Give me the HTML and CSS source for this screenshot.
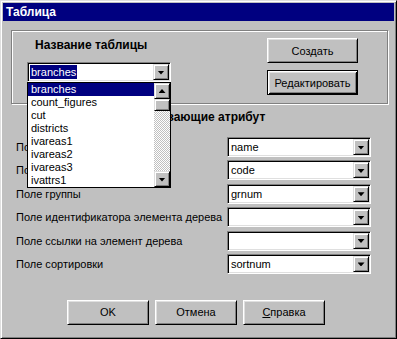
FILE: index.html
```html
<!DOCTYPE html>
<html lang="ru">
<head>
  <meta charset="UTF-8" />
  <title>Таблица</title>
  <link rel="stylesheet" href="styles.css">
</head>
<body>

  <div class="window">
    <div class="titlebar">Таблица</div>

    <div class="dialog">

      <div class="groupbox">
        <div class="table-pick">
          <h2 class="caption">Название таблицы</h2>
          <div class="combo">
            <span class="combo-text"><span class="selected">branches</span></span>
            <span class="combo-btn"><span class="arrow"></span></span>

            <div class="droplist">
              <ul class="items">
                <li class="active">branches</li>
                <li>count_figures</li>
                <li>cut</li>
                <li>districts</li>
                <li>ivareas1</li>
                <li>ivareas2</li>
                <li>ivareas3</li>
                <li>ivattrs1</li>
              </ul>
              <div class="scrollbar">
                <span class="sb-btn"><span class="arrow arrow-up"></span></span>
                <span class="sb-thumb"></span>
                <span class="sb-track"></span>
                <span class="sb-btn"><span class="arrow"></span></span>
              </div>
            </div>
          </div>
        </div>

        <div class="group-buttons">
          <button class="btn">Создать</button>
          <button class="btn btn-default">Редактировать</button>
        </div>
      </div>

      <h2 class="caption caption-attrs">Поля таблицы, описывающие атрибут</h2>

      <div class="fields">
        <label>Поле наименования</label>
        <div class="combo"><span class="combo-text">name</span><span class="combo-btn"><span class="arrow"></span></span></div>

        <label>Поле кода</label>
        <div class="combo"><span class="combo-text">code</span><span class="combo-btn"><span class="arrow"></span></span></div>

        <label>Поле группы</label>
        <div class="combo"><span class="combo-text">grnum</span><span class="combo-btn"><span class="arrow"></span></span></div>

        <label>Поле идентификатора элемента дерева</label>
        <div class="combo"><span class="combo-text"></span><span class="combo-btn"><span class="arrow"></span></span></div>

        <label>Поле ссылки на элемент дерева</label>
        <div class="combo"><span class="combo-text"></span><span class="combo-btn"><span class="arrow"></span></span></div>

        <label>Поле сортировки</label>
        <div class="combo"><span class="combo-text">sortnum</span><span class="combo-btn"><span class="arrow"></span></span></div>
      </div>

      <div class="footer">
        <button class="btn btn-small">OK</button>
        <button class="btn btn-small">Отмена</button>
        <button class="btn btn-small"><u>С</u>правка</button>
      </div>

    </div>
  </div>

</body>
</html>
```

FILE: styles.css
```css
body {
  margin: 0;
  font-family: 'Liberation Sans', Arial, sans-serif;
  font-size: 11px;
  color: #000;
  background-color: #c0c0c0;
}

.window {
  width: 397px;
  height: 339px;
  box-sizing: border-box;
  background-color: #c0c0c0;
  border: 1px solid;
  border-color: #dfdfdf #000 #000 #dfdfdf;
  box-shadow: inset 1px 1px #fff, inset -1px -1px #808080;
  padding: 2px;
}

.titlebar {
  height: 18px;
  background-color: #000080;
  color: #fff;
  font-weight: bold;
  font-size: 12px;
  line-height: 18px;
  padding-left: 3px;
}

.dialog {
  padding: 9px 6px 0 8px;
}

/* group box with etched frame */
.groupbox {
  height: 74px;
  box-sizing: border-box;
  border: 1px solid #808080;
  box-shadow: inset 1px 1px #fff, 1px 1px #fff;
  padding: 7px 29px 0 15px;
  display: flex;
}

.caption {
  margin: 0;
  font-size: 12px;
  font-weight: bold;
  line-height: 15px;
  padding-left: 8px;
}

.table-pick .combo {
  margin-top: 9px;
}

.group-buttons {
  margin-left: auto;
  display: flex;
  flex-direction: column;
  gap: 7px;
}

.btn {
  width: 91px;
  height: 25px;
  box-sizing: border-box;
  background-color: #c0c0c0;
  border: 1px solid;
  border-color: #fff #000 #000 #fff;
  box-shadow: inset 1px 1px #dfdfdf, inset -1px -1px #808080;
  font-family: 'Liberation Sans', Arial, sans-serif;
  font-size: 11px;
  color: #000;
  padding: 0;
}

.btn-default {
  border-color: #000;
  box-shadow: inset 1px 1px #fff, inset -1px -1px #000, inset 2px 2px #dfdfdf, inset -2px -2px #808080;
}

.btn-small {
  width: 82px;
}

/* combo box */
.combo {
  position: relative;
  width: 144px;
  height: 20px;
  box-sizing: border-box;
  background-color: #fff;
  border: 1px solid;
  border-color: #808080 #fff #fff #808080;
  box-shadow: inset 1px 1px #000, inset -1px -1px #dfdfdf;
  padding: 1px;
  display: flex;
}

.combo-text {
  flex: 1;
  line-height: 16px;
  padding-left: 2px;
  white-space: nowrap;
}

.selected {
  background-color: #000080;
  color: #fff;
  padding: 1px 1px;
  margin-left: -1px;
}

.combo-btn,
.sb-btn {
  width: 16px;
  height: 16px;
  box-sizing: border-box;
  background-color: #c0c0c0;
  border: 1px solid;
  border-color: #dfdfdf #000 #000 #dfdfdf;
  box-shadow: inset 1px 1px #fff, inset -1px -1px #808080;
  display: flex;
  align-items: center;
  justify-content: center;
  flex-shrink: 0;
}

.arrow {
  width: 7px;
  height: 4px;
  background-color: #000;
  clip-path: polygon(0 0, 100% 0, 50% 100%);
  margin-top: 1px;
}

.arrow-up {
  clip-path: polygon(50% 0, 100% 100%, 0 100%);
  margin-top: 0;
}

/* open drop-down list */
.droplist {
  position: absolute;
  top: calc(100% + 1px);
  left: -1px;
  width: 144px;
  height: 106px;
  box-sizing: border-box;
  background-color: #fff;
  border: 1px solid #000;
  display: flex;
  z-index: 10;
}

.items {
  list-style: none;
  margin: 0;
  padding: 0;
  flex: 1;
}

.items li {
  height: 13px;
  line-height: 13px;
  padding-left: 3px;
}

.items li.active {
  background-color: #000080;
  color: #fff;
}

.scrollbar {
  width: 16px;
  display: flex;
  flex-direction: column;
}

.sb-thumb {
  height: 12px;
  box-sizing: border-box;
  background-color: #c0c0c0;
  border: 1px solid;
  border-color: #dfdfdf #000 #000 #dfdfdf;
  box-shadow: inset 1px 1px #fff, inset -1px -1px #808080;
}

.sb-track {
  flex: 1;
  background: repeating-conic-gradient(#c0c0c0 0 25%, #fff 0 50%) 0 0 / 2px 2px;
}

.caption-attrs {
  margin-top: 6px;
  padding-left: 24px;
}

.fields {
  margin-top: 12px;
  padding-left: 5px;
  display: grid;
  grid-template-columns: 211px 144px;
  row-gap: 3.4px;
  align-items: center;
}

.fields label {
  white-space: nowrap;
}

.footer {
  margin-top: 26px;
  padding-left: 56px;
  display: flex;
  gap: 6px;
}
```
